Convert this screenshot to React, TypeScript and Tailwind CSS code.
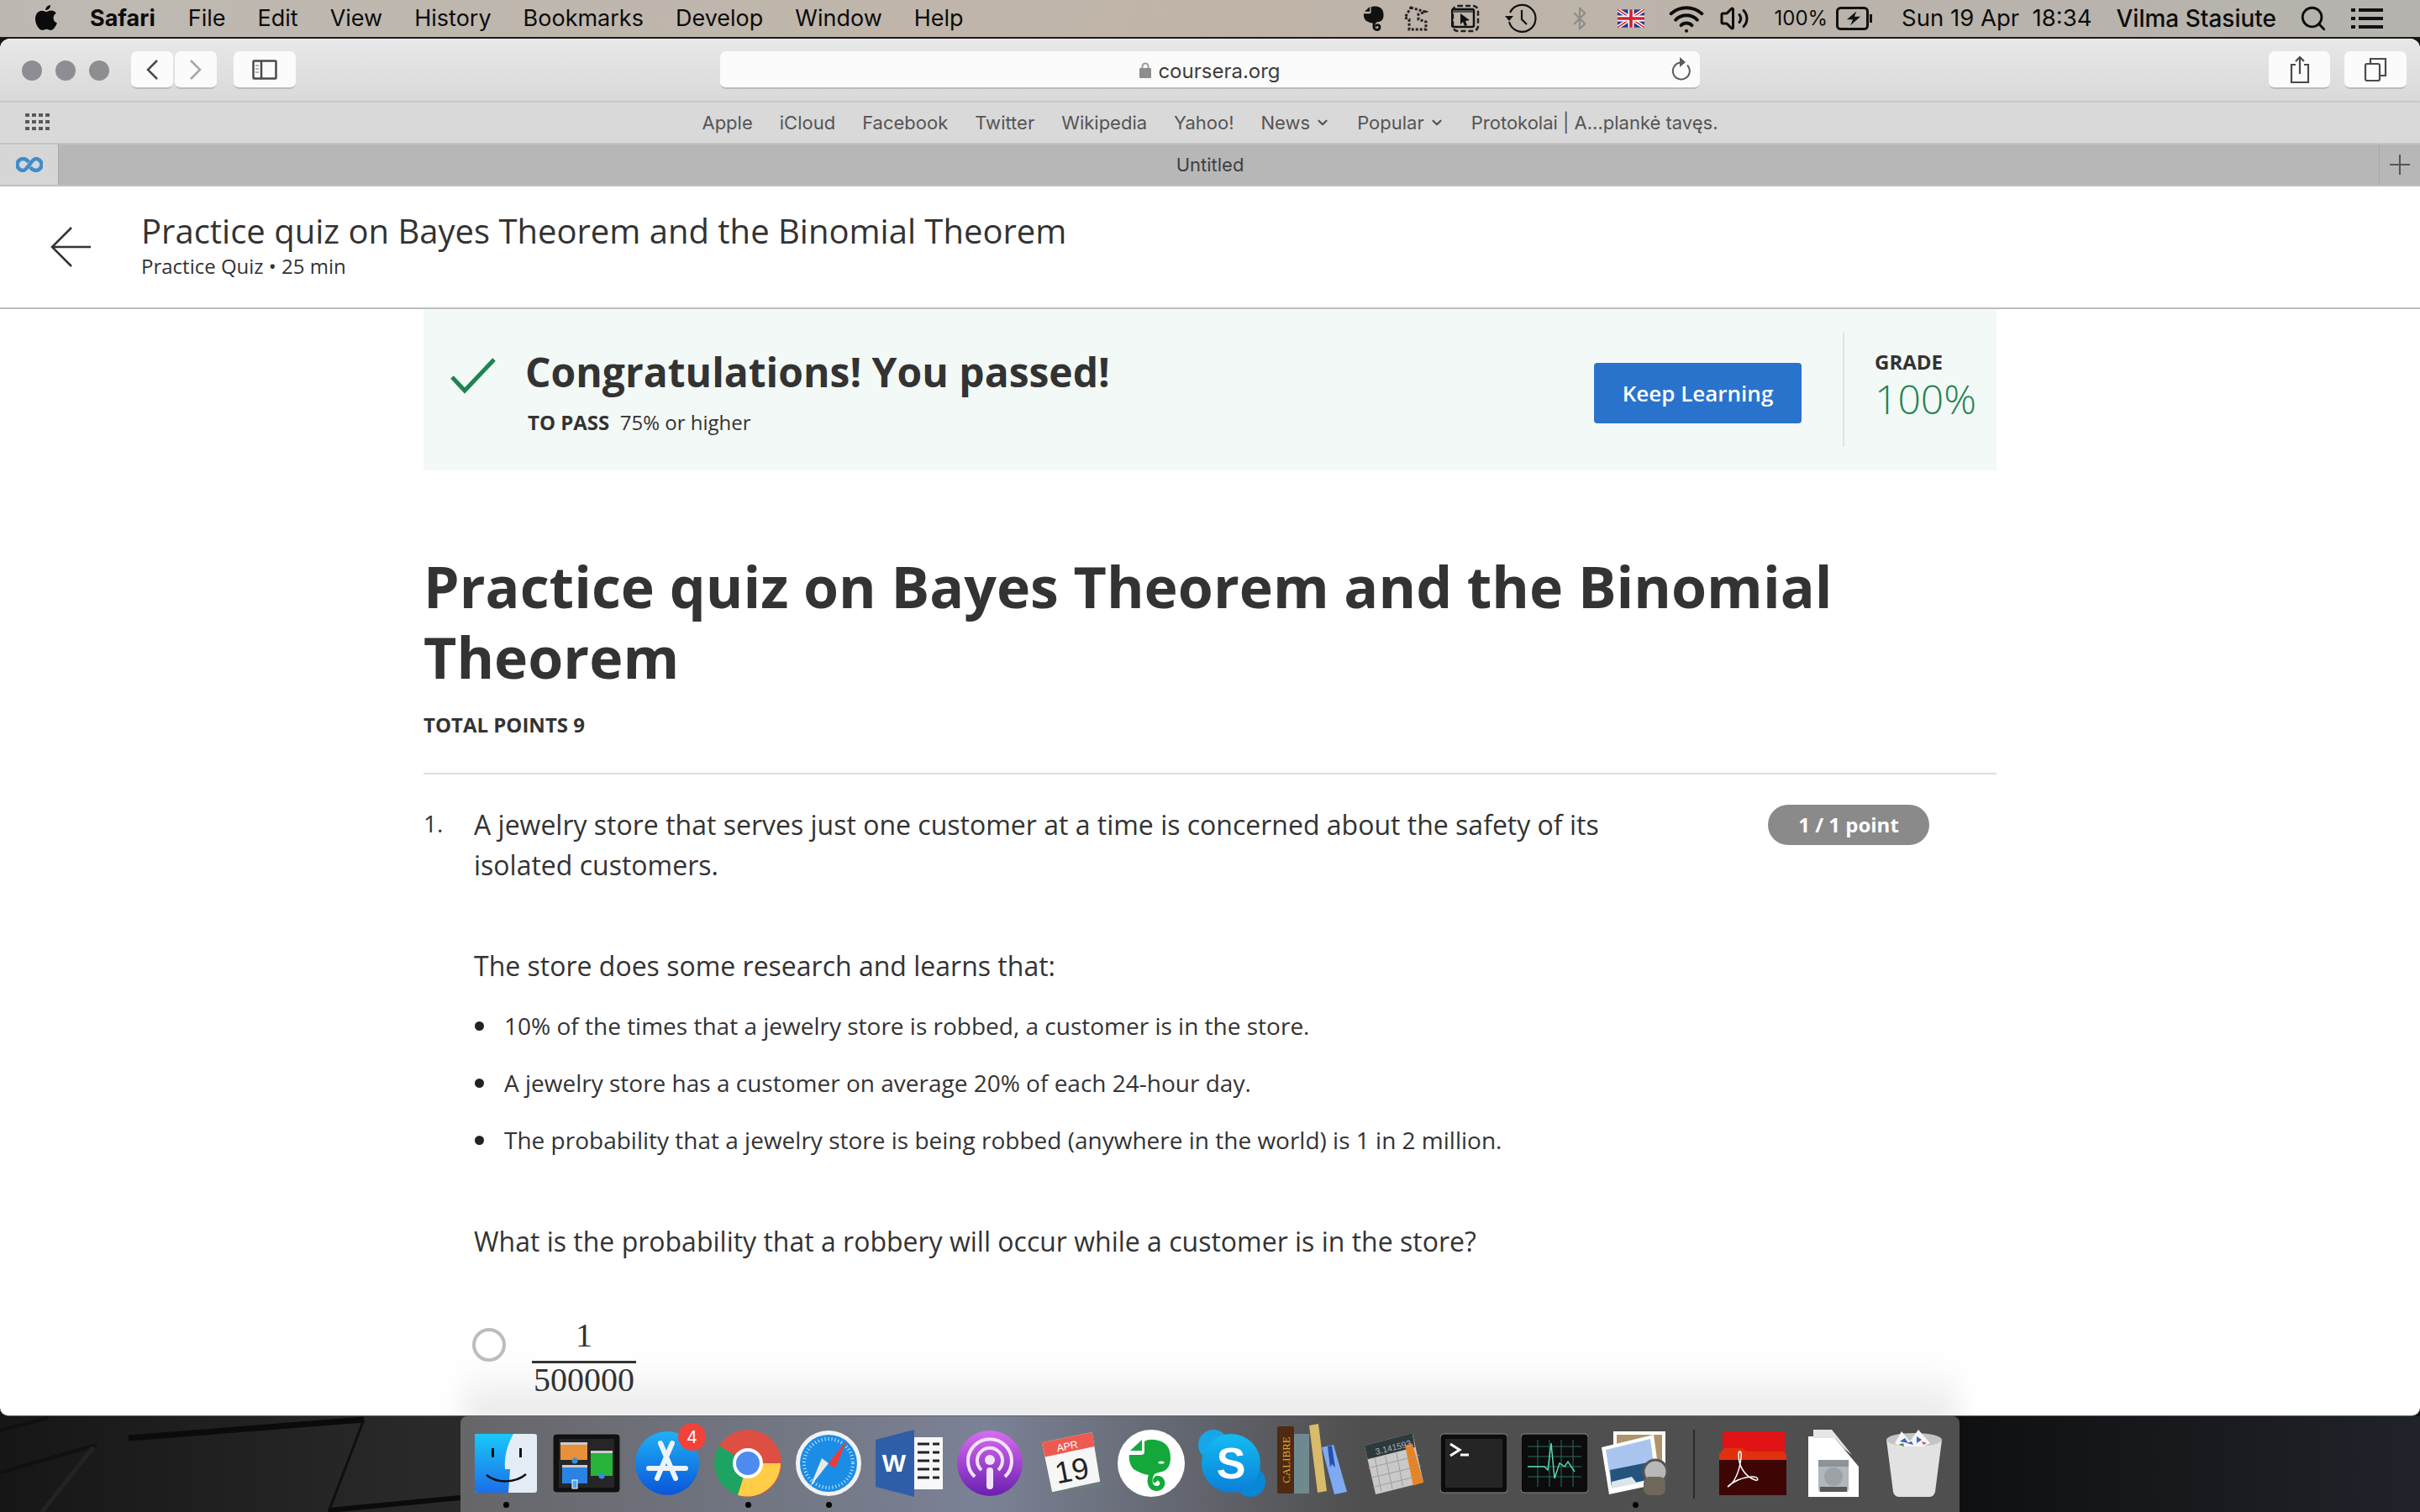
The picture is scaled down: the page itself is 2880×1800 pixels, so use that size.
import { Bluetooth, ChevronDown, Search, Volume2, Wifi } from "lucide-react";
import type { ReactNode } from "react";

const menus = ["File", "Edit", "View", "History", "Bookmarks", "Develop", "Window", "Help"];
const bookmarks = ["Apple", "iCloud", "Facebook", "Twitter", "Wikipedia", "Yahoo!"];
const bullets = [
  "10% of the times that a jewelry store is robbed, a customer is in the store.",
  "A jewelry store has a customer on average 20% of each 24-hour day.",
  "The probability that a jewelry store is being robbed (anywhere in the world) is 1 in 2 million.",
];

const elephantBody =
  "M16 30L28 30Q32 30 32 26L32 14Q36 11 44 12C56 13 63 20 63 33C63 42 60 48 53 50C48 51 44 52 42 54L37 54C30 53 24 50 19 47C15 43 13 35 14 30Z";

function AppleLogo() {
  return (
    <svg width="28" height="32" viewBox="0 0 28 32" className="text-[#0b0b0b]">
      <path
        fill="currentColor"
        d="M19 1c.3 3-2.600 6.300-5.800 6.100C12.800 4.200 15.800 1.200 19 1zM14 9c1.600 0 3.300-1.400 5.800-1.400 2.300 0 4.600 1.100 6 3.200-4.900 2.900-4 9.700 1.100 11.700-1.300 3.200-4.300 8.500-7.300 8.500-1.900 0-2.900-1.300-5.200-1.300s-3.500 1.300-5.300 1.300C5.300 31 1 23.600 1 17.600 1 11.500 5 7.800 8.700 7.800 10.900 7.800 12.500 9 14 9z"
      />
    </svg>
  );
}

function StatusIcons() {
  return (
    <div className="ml-auto flex items-center pr-[44px] text-[28px] text-[#0c0c0c]">
      <svg width="26" height="34" viewBox="12 10 54 64">
        <path d="M29 13L29 25L16 25Z" fill="#111" />
        <path d={elephantBody} fill="#111" />
        <path d="M42 50C36 60 38 70 47 70C54 70 56 60 49 58C46 57 44 60 46 62" fill="none" stroke="#111" strokeWidth="6" />
      </svg>
      <svg width="30" height="32" viewBox="0 0 30 32" className="ml-[22px]" fill="none" stroke="#222" strokeWidth="3" strokeDasharray="3 2">
        <path d="M9 3l17 5-8 3v6l9 3v9H7V17L2 15z" />
      </svg>
      <svg width="34" height="34" viewBox="0 0 34 34" className="ml-[27px]" fill="none">
        <rect x="2" y="2" width="30" height="30" rx="6" stroke="#222" strokeWidth="2.500" strokeDasharray="6 3" />
        <rect x="1" y="6" width="26" height="21" rx="2" stroke="#111" strokeWidth="2.500" />
        <rect x="2" y="7" width="24" height="3" fill="#555" />
        <path d="M11 11l11 8-5 1 2 5-3 1-2-5-3 3z" fill="#111" />
      </svg>
      <svg width="38" height="38" viewBox="0 0 38 38" className="ml-[30px]" fill="none" stroke="#111" strokeWidth="2.200">
        <path d="M6 12a16 16 0 1 1-1 11" />
        <path d="M0 16h10l-5 6z" fill="#111" stroke="none" />
        <path d="M20 9v11l6 6" />
      </svg>
      <Bluetooth size={30} strokeWidth={1.700} className="ml-[36px] text-[#8f8d89]" />
      <svg width="32" height="22" viewBox="0 0 60 40" className="ml-[30px]">
        <rect width="60" height="40" fill="#283b8e" />
        <path d="M0 0l60 40M60 0L0 40" stroke="#fff" strokeWidth="8" />
        <path d="M0 0l60 40M60 0L0 40" stroke="#d3232f" strokeWidth="3" />
        <path d="M30 0v40M0 20h60" stroke="#fff" strokeWidth="13" />
        <path d="M30 0v40M0 20h60" stroke="#d3232f" strokeWidth="7" />
      </svg>
      <Wifi size={44} strokeWidth={2.200} className="ml-[28px]" />
      <Volume2 size={36} strokeWidth={2} className="ml-[17px]" />
      <span className="ml-[29px] text-[24px]">100%</span>
      <svg width="44" height="28" viewBox="0 0 44 28" className="ml-[10px]" fill="none">
        <rect x="1.500" y="1.500" width="36" height="25" rx="4" stroke="#111" strokeWidth="3" />
        <rect x="40" y="9" width="3" height="10" fill="#111" />
        <path d="M26 3L11 16h8l-4 9 16-14h-8z" fill="#111" stroke="#b8b5ae" strokeWidth="1.500" />
      </svg>
      <span className="ml-[34px] text-[27.500px]">Sun 19 Apr&nbsp; 18:34</span>
      <span className="ml-[29px] font-medium">Vilma Stasiute</span>
      <Search size={34} strokeWidth={2} className="ml-[27px]" />
      <svg width="38" height="26" viewBox="0 0 38 26" className="ml-[28px]" fill="#111">
        <rect y="1" width="5" height="4" />
        <rect x="9" y="1" width="29" height="4" />
        <rect y="11" width="5" height="4" />
        <rect x="9" y="11" width="29" height="4" />
        <rect y="21" width="5" height="4" />
        <rect x="9" y="21" width="29" height="4" />
      </svg>
    </div>
  );
}

function ToolButton({ className, children }: { className: string; children: ReactNode }) {
  return (
    <div className={`flex h-[45px] items-center justify-center rounded-[7px] border-b-2 border-[#bcbcbc] bg-[#fbfbfb] ${className}`}>
      {children}
    </div>
  );
}

function Toolbar() {
  return (
    <div className="flex h-[76px] shrink-0 items-start border-b-2 border-[#c8c8c8] bg-gradient-to-b from-[#e8e8e8] to-[#d9d9d9] pt-[15px]">
      <div className="ml-[26px] mt-[11px] flex gap-[16px]">
        <div className="h-[24px] w-[24px] rounded-full bg-[#8e8e92]" />
        <div className="h-[24px] w-[24px] rounded-full bg-[#8e8e92]" />
        <div className="h-[24px] w-[24px] rounded-full bg-[#8e8e92]" />
      </div>
      <ToolButton className="ml-[26px] w-[50px]">
        <svg width="18" height="26" viewBox="0 0 18 26" fill="none" stroke="#4a4a4a" strokeWidth="2.500">
          <path d="M15 2L4 13l11 11" />
        </svg>
      </ToolButton>
      <ToolButton className="ml-[2px] w-[50px]">
        <svg width="18" height="26" viewBox="0 0 18 26" fill="none" stroke="#a6a6a6" strokeWidth="2.500">
          <path d="M3 2l11 11L3 24" />
        </svg>
      </ToolButton>
      <ToolButton className="ml-[20px] w-[74px]">
        <svg width="30" height="24" viewBox="0 0 30 24" fill="none" stroke="#4a4a4a" strokeWidth="2.500">
          <rect x="1.500" y="1.500" width="27" height="21" rx="1" />
          <path d="M11 1.500v21" />
          <path d="M4 7h4M4 11h4M4 15h4" strokeWidth="1.500" stroke="#999" />
        </svg>
      </ToolButton>
      <ToolButton className="relative ml-[505px] w-[1166px]">
        <svg width="14" height="20" viewBox="0 0 14 20" className="mr-[8px] mt-[1px]">
          <path d="M3.500 9V6a3.500 3.500 0 0 1 7 0v3" fill="none" stroke="#9a9a9a" strokeWidth="2" />
          <rect y="8" width="14" height="12" rx="1" fill="#8d8d8d" />
        </svg>
        <span className="pt-[4px] text-[24px] text-[#3d3d3d]">coursera.org</span>
        <svg width="26" height="30" viewBox="0 0 26 30" className="absolute right-[11px] top-[7px]" fill="none" stroke="#5a5a5a" strokeWidth="2">
          <path d="M15 6.500a10 10 0 1 0 7 3" />
          <path d="M13 0l7 6-7 6z" fill="#5a5a5a" stroke="none" />
        </svg>
      </ToolButton>
      <ToolButton className="ml-[677px] w-[73px]">
        <svg width="24" height="34" viewBox="0 0 24 34" fill="none" stroke="#4a4a4a" strokeWidth="2.200">
          <path d="M7 11H2v21h20V11h-5M12 22V2M7 7l5-5 5 5" />
        </svg>
      </ToolButton>
      <ToolButton className="ml-[17px] w-[74px]">
        <svg width="28" height="30" viewBox="0 0 28 30" fill="none" stroke="#4a4a4a" strokeWidth="2.200">
          <rect x="2" y="8" width="17" height="20" rx="2" />
          <path d="M8 8V2h18v20h-7" />
        </svg>
      </ToolButton>
    </div>
  );
}

function BookmarksBar() {
  return (
    <div className="relative flex h-[50px] shrink-0 items-center justify-center gap-[32px] border-b-2 border-[#c4c4c4] bg-[#d9d9d9] text-[22px] text-[#555]">
      <div className="absolute left-[30px] top-[13px] grid grid-cols-4 gap-x-[3px] gap-y-[4px]">
        {Array.from({ length: 12 }).map((_, i) => (
          <div key={i} className="h-[4px] w-[5px] bg-[#5a5a5a]" />
        ))}
      </div>
      {bookmarks.map((b) => (
        <span key={b}>{b}</span>
      ))}
      <span className="flex items-center gap-[6px]">
        News <ChevronDown size={18} strokeWidth={3} />
      </span>
      <span className="flex items-center gap-[6px]">
        Popular <ChevronDown size={18} strokeWidth={3} />
      </span>
      <span>Protokolai | A...plankė tavęs.</span>
    </div>
  );
}

function TabBar() {
  return (
    <div className="flex h-[50px] shrink-0 items-stretch border-b-2 border-[#c0c0c0] bg-[#b7b7b7] text-[22px] text-[#3f3f3f]">
      <div className="flex w-[70px] items-center justify-center border-r border-[#a9a9a9] bg-[#d6d6d6]">
        <svg width="32" height="18" viewBox="0 0 32 18" fill="none" stroke="#3f8ccb" strokeWidth="4.500">
          <path d="M15 6c-2-3-4-4-6.500-4a7 7 0 0 0 0 14c5 0 10-14 15-14a7 7 0 0 1 0 14c-2.500 0-4.500-1-6.500-4" />
        </svg>
      </div>
      <div className="flex flex-1 items-center justify-center pr-[21px]">Untitled</div>
      <div className="flex w-[49px] items-center justify-center border-l border-[#a9a9a9]">
        <svg width="24" height="24" viewBox="0 0 24 24" stroke="#555" strokeWidth="2">
          <path d="M12 0v24M0 12h24" />
        </svg>
      </div>
    </div>
  );
}

function Banner() {
  return (
    <div className="flex h-[192px] bg-[#f3f9f6]">
      <svg width="55" height="44" viewBox="0 0 55 44" className="ml-[32px] mt-[57px]" fill="none" stroke="#1f8354" strokeWidth="5">
        <path d="M2 24l15 16L52 3" />
      </svg>
      <div className="ml-[34px] pt-[45px]">
        <h2 className="text-[48px] font-bold leading-[60px] text-[#333]">Congratulations! You passed!</h2>
        <p className="ml-[3px] mt-[16px] text-[24px] leading-[28px] text-[#333]">
          <span className="font-bold">TO PASS</span>&nbsp; 75% or higher
        </p>
      </div>
      <button className="ml-auto mt-[64px] h-[72px] w-[247px] rounded-[4px] bg-[#2a73cc] text-[26px] font-semibold text-white">
        Keep Learning
      </button>
      <div className="ml-[49px] mt-[28px] h-[136px] w-[2px] bg-[#dfe5e2]" />
      <div className="ml-[36px] w-[145px] pt-[48px]">
        <p className="text-[24px] font-bold leading-[30px] text-[#333]">GRADE</p>
        <p className="text-[48px] font-light leading-[58px] text-[#1f8354]">100%</p>
      </div>
    </div>
  );
}

function Question() {
  return (
    <div className="mt-[36px] flex">
      <div className="w-[60px] text-[28px] leading-[44px] text-[#333]">1.</div>
      <div className="flex-1 text-[#333]">
        <div className="flex items-start">
          <p className="w-[1400px] text-[32px] leading-[48px]">
            A jewelry store that serves just one customer at a time is concerned about the safety of its isolated customers.
          </p>
          <div className="ml-auto mr-[80px] flex h-[48px] w-[192px] items-center justify-center rounded-full bg-[#8a8a8a] text-[24px] font-bold text-white">
            1 / 1 point
          </div>
        </div>
        <p className="mt-[72px] text-[32px] leading-[48px]">The store does some research and learns that:</p>
        <ul className="mt-[27px] flex flex-col gap-[28px]">
          {bullets.map((b) => (
            <li key={b} className="flex items-center text-[28px] leading-[40px]">
              <span className="ml-[1px] mr-[24px] h-[11px] w-[11px] rounded-full bg-[#222]" />
              {b}
            </li>
          ))}
        </ul>
        <p className="mt-[77px] text-[32px] leading-[48px]">What is the probability that a robbery will occur while a customer is in the store?</p>
        <div className="mt-[63px] flex items-start">
          <div className="-ml-[2px] mt-[16px] h-[40px] w-[40px] rounded-full border-[4px] border-[#bdbdbd]" />
          <div className="ml-[31px] w-[124px] text-center font-['Liberation_Serif',serif] text-[40px] text-[#333]">
            <div className="h-[58px] border-b-[3px] border-[#333] leading-[50px]">1</div>
            <div className="leading-[40px]">500000</div>
          </div>
        </div>
      </div>
    </div>
  );
}

function IconFinder() {
  return (
    <svg viewBox="0 0 80 80" className="h-full w-full">
      <defs>
        <linearGradient id="fb" x1="0" y1="0" x2="0" y2="1">
          <stop offset="0" stopColor="#19c8fb" />
          <stop offset="1" stopColor="#1b6fe8" />
        </linearGradient>
      </defs>
      <rect x="3" y="5" width="74" height="70" rx="3" fill="#e4edf6" />
      <path d="M6 5h43c-8 14-11 28-10 42h6l-2 28H6a3 3 0 0 1-3-3V8a3 3 0 0 1 3-3z" fill="url(#fb)" />
      <rect x="23" y="22" width="3" height="11" fill="#111" />
      <rect x="56" y="22" width="3" height="11" fill="#111" />
      <path d="M17 54c12 10 34 10 47-1" fill="none" stroke="#111" strokeWidth="2.500" />
    </svg>
  );
}

function IconMission() {
  return (
    <svg viewBox="0 0 80 80" className="h-full w-full">
      <rect x="0" y="5" width="80" height="70" rx="4" fill="#111" stroke="#777" />
      <rect x="7" y="11" width="66" height="58" fill="#262626" />
      <rect x="9" y="15" width="32" height="21" fill="#e8903a" />
      <rect x="9" y="15" width="32" height="3" fill="#ccc" />
      <rect x="45" y="25" width="26" height="30" fill="#28b33a" />
      <rect x="45" y="25" width="26" height="3" fill="#ccc" />
      <rect x="11" y="42" width="30" height="22" fill="#2a82e4" />
      <rect x="11" y="42" width="30" height="3" fill="#ccc" />
      <circle cx="26" cy="37" r="3.500" fill="#2f8ee8" />
      <circle cx="58" cy="55" r="3.500" fill="#2f8ee8" />
      <rect x="23" y="60" width="6" height="10" fill="#4aa7f0" stroke="#fff" />
    </svg>
  );
}

function IconAppStore() {
  return (
    <svg viewBox="0 0 80 80" className="h-full w-full">
      <defs>
        <linearGradient id="ab" x1="0" y1="0" x2="0" y2="1">
          <stop offset="0" stopColor="#1fb1f7" />
          <stop offset="1" stopColor="#0a55d8" />
        </linearGradient>
      </defs>
      <circle cx="40" cy="40" r="38" fill="url(#ab)" />
      <path d="M46 16L28 58M32 16l18 42M18 46h44" stroke="#eef3f8" strokeWidth="6" strokeLinecap="round" fill="none" />
    </svg>
  );
}

function IconChrome() {
  return (
    <svg viewBox="0 0 80 80" className="h-full w-full">
      <circle cx="40" cy="40" r="40" fill="#dd4f43" />
      <path d="M40 40L6 19A40 40 0 0 0 28 78z" fill="#1da462" />
      <path d="M40 40h39A40 40 0 0 1 28 78z" fill="#ffcd46" />
      <circle cx="40" cy="40" r="18" fill="#fff" />
      <circle cx="40" cy="40" r="14" fill="#4e8bf0" />
    </svg>
  );
}

function IconSafari() {
  return (
    <svg viewBox="0 0 80 80" className="h-full w-full">
      <circle cx="40" cy="40" r="39" fill="#f2f2f2" />
      <circle cx="40" cy="40" r="34" fill="#1b8de6" />
      <circle cx="40" cy="40" r="29" fill="none" stroke="#cfeaff" strokeWidth="4" strokeDasharray="1 3" />
      <path d="M40 40l22-28-14 34z" fill="#ee3a33" />
      <path d="M40 40L18 68l14-34z" fill="#e8e8e8" />
    </svg>
  );
}

function IconWord() {
  return (
    <svg viewBox="0 0 80 80" className="h-full w-full">
      <rect x="44" y="9" width="36" height="62" fill="#f7f7f7" />
      <path d="M50 17h26M50 27h26M50 37h26M50 47h26M50 57h26" stroke="#222" strokeWidth="3" strokeDasharray="14 4 8 0" />
      <path d="M0 12L46 0v80L0 68z" fill="#2f5ea8" />
      <text x="22" y="50" textAnchor="middle" fontSize="30" fontWeight="700" fill="#fff" fontFamily="'Liberation Sans',sans-serif">W</text>
    </svg>
  );
}

function IconPodcasts() {
  return (
    <svg viewBox="0 0 80 80" className="h-full w-full">
      <defs>
        <linearGradient id="pc" x1="0" y1="0" x2="0" y2="1">
          <stop offset="0" stopColor="#d76cf0" />
          <stop offset="1" stopColor="#6a1fb0" />
        </linearGradient>
      </defs>
      <circle cx="40" cy="40" r="39" fill="url(#pc)" />
      <path d="M22 56a26 26 0 1 1 36 0" fill="none" stroke="#f2e3fb" strokeWidth="4" />
      <path d="M30 48a15 15 0 1 1 20 0" fill="none" stroke="#f2e3fb" strokeWidth="4" />
      <circle cx="40" cy="36" r="6" fill="#f2e3fb" />
      <rect x="36" y="45" width="8" height="26" rx="4" fill="#f2e3fb" />
    </svg>
  );
}

function IconCalendar() {
  return (
    <svg viewBox="0 0 80 80" className="h-full w-full">
      <path d="M2 16L66 2l13 66-61 12z" fill="#6d7b7f" />
      <path d="M4 14L67 1l10 62-60 13z" fill="#f6f6f6" />
      <path d="M4 14L67 1l3 18-62 13z" fill="#ee5a50" />
      <text x="36" y="23" textAnchor="middle" fontSize="13" fill="#fff" transform="rotate(-11 36 19)" fontFamily="'Liberation Sans',sans-serif">APR</text>
      <text x="42" y="62" textAnchor="middle" fontSize="38" fill="#222" transform="rotate(-11 42 50)" fontFamily="'Liberation Sans',sans-serif">19</text>
    </svg>
  );
}

function IconEvernote() {
  return (
    <svg viewBox="0 0 80 80" className="h-full w-full">
      <circle cx="40" cy="40" r="40" fill="#fff" />
      <path d="M29 12L29 25L15 25Z" fill="#14a83b" />
      <path d={elephantBody} fill="#14a83b" />
      <path d="M42 50C36 60 38 70 47 70C54 70 56 60 49 58C46 57 44 60 46 62" fill="none" stroke="#14a83b" strokeWidth="6" />
      <ellipse cx="52" cy="39" rx="3.500" ry="1.500" fill="#fff" />
    </svg>
  );
}

function IconSkype() {
  return (
    <svg viewBox="0 0 80 80" className="h-full w-full">
      <defs>
        <linearGradient id="sk" x1="0" y1="0" x2="0" y2="1">
          <stop offset="0" stopColor="#14bcf3" />
          <stop offset="1" stopColor="#0a7fd8" />
        </linearGradient>
      </defs>
      <circle cx="18" cy="18" r="18" fill="#18a6e8" />
      <circle cx="62" cy="62" r="18" fill="#0a86d6" />
      <circle cx="39" cy="40" r="35" fill="url(#sk)" />
      <text x="39" y="58" textAnchor="middle" fontSize="52" fontWeight="700" fill="#fff" fontFamily="'Liberation Sans',sans-serif">S</text>
    </svg>
  );
}

function IconCalibre() {
  return (
    <svg viewBox="0 0 84 80" className="h-full w-full overflow-visible">
      <rect x="0" y="-4" width="20" height="80" rx="2" fill="#4f2a10" />
      <rect x="20" y="5" width="18" height="71" fill="#6f8a8f" />
      <path d="M38 -5l11-2 10 80-11 2z" fill="#d8bb6c" />
      <path d="M53 21l14-3 16 56-15 3z" fill="#7eaaf4" />
      <path d="M60 20l5-1 4 26-4-4-2 4z" fill="#2850a8" />
      <text x="-36" y="15" fontSize="13" fill="#e0a93a" transform="rotate(-90)" textAnchor="middle" fontFamily="'Liberation Serif',serif">CALIBRE</text>
    </svg>
  );
}

function IconCalculator() {
  return (
    <svg viewBox="0 0 80 80" className="h-full w-full">
      <path d="M4 18L64 2l14 62-60 15z" fill="#c9c9c9" />
      <path d="M4 18L64 2l3 18-59 15z" fill="#2d3a3c" />
      <path d="M55 18l9-3 14 49-13 4z" fill="#e98320" />
      <text x="40" y="24" fontSize="11" textAnchor="middle" fill="#aab" transform="rotate(-14 40 20)" fontFamily="'Liberation Sans',sans-serif">3.141593</text>
      <path d="M17 33l8 42M30 30l9 42M44 26l8 43M9 46l64-16M13 58l62-15M15 70l60-15" stroke="#9c9c9c" strokeWidth="1" />
    </svg>
  );
}

function IconTerminal() {
  return (
    <svg viewBox="0 0 80 80" className="h-full w-full">
      <rect y="5" width="80" height="70" rx="4" fill="#0c0c0c" stroke="#8a8a8a" />
      <rect x="6" y="11" width="68" height="58" fill="#252525" />
      <path d="M12 17l11 7-11 7" fill="none" stroke="#fff" strokeWidth="3" />
      <path d="M24 30h10" stroke="#fff" strokeWidth="3" />
    </svg>
  );
}

function IconActivity() {
  return (
    <svg viewBox="0 0 80 80" className="h-full w-full">
      <rect y="5" width="80" height="70" rx="4" fill="#0c0c0c" stroke="#8a8a8a" />
      <path d="M8 20h64M8 32h64M8 44h64M8 56h64M20 12v56M34 12v56M48 12v56M62 12v56" stroke="#2d6a62" strokeWidth="1" />
      <path d="M8 44h20l4 4 4-32 4 42 6-18 6 4 4-6 8 12" fill="none" stroke="#58d6b8" strokeWidth="1.500" />
    </svg>
  );
}

function IconPreview() {
  return (
    <svg viewBox="0 0 80 80" className="h-full w-full">
      <rect x="14" y="2" width="62" height="44" fill="#fff" />
      <rect x="18" y="6" width="54" height="38" fill="#ae946a" />
      <path d="M0 21l62-15 8 58-61 13z" fill="#fff" />
      <path d="M5 24l53-13 6 47-52 11z" fill="#a9c5ef" />
      <path d="M10 48l50-10 3 20-51 11z" fill="#24547e" />
      <path d="M12 62l24-6 6 8-30 6z" fill="#dbe6ec" />
      <circle cx="64" cy="50" r="14" fill="#b8b8b8" stroke="#555" strokeWidth="3" />
      <rect x="50" y="56" width="26" height="22" rx="7" fill="#6f675a" />
    </svg>
  );
}

function IconAcrobat() {
  return (
    <svg viewBox="0 0 80 80" className="h-full w-full">
      <path d="M4 2h74v26H4z" fill="#e01414" />
      <path d="M0 29l6-7h22l4 4h44l4 4v8H0z" fill="#e0310e" />
      <rect y="36" width="80" height="42" fill="#3e0505" />
      <path d="M10 68c8-4 14-18 16-34 1-10-3-10-3-4 0 14 8 26 20 30 5 1 3-4-3-4-12 0-24 6-30 12z" fill="none" stroke="#fff" strokeWidth="1.500" />
    </svg>
  );
}

function IconDocs() {
  return (
    <svg viewBox="0 0 60 80" className="h-full w-full">
      <path d="M0 8h30l30 36v36H0z" fill="#fff" />
      <path d="M6 0h22l24 30-10-8-10-12H6z" fill="#e6e6e6" />
      <rect x="12" y="36" width="36" height="38" rx="3" fill="#b1b7bb" />
      <rect x="12" y="36" width="36" height="8" fill="#8d9396" />
      <circle cx="30" cy="56" r="11" fill="#9ca2a6" />
      <rect x="14" y="68" width="32" height="6" fill="#55595c" />
    </svg>
  );
}

function IconTrash() {
  return (
    <svg viewBox="0 0 70 80" className="h-full w-full">
      <path d="M2 12h66l-8 62a8 8 0 0 1-8 6H18a8 8 0 0 1-8-6z" fill="#e2e2e2" />
      <ellipse cx="35" cy="12" rx="33" ry="8" fill="#c4c4c4" />
      <path d="M12 16l8-14 10 12 10-14 14 16-8 4H18z" fill="#f6f6f6" />
      <path d="M18 14l6-4 4 6zM38 8l6 4-6 4zM26 16l6-2 2 4z" fill="#3f66b8" />
      <path d="M44 14l6 2-4 2z" fill="#c8553a" />
      <path d="M16 18l6-2 1 4z" fill="#4a8b4a" />
    </svg>
  );
}

const dockIcons: { icon: ReactNode; dot?: boolean; w: string }[] = [
  { icon: <IconFinder />, dot: true, w: "w-[80px]" },
  { icon: <IconMission />, w: "w-[80px]" },
  { icon: <IconAppStore />, w: "w-[80px]" },
  { icon: <IconChrome />, dot: true, w: "w-[84px]" },
  { icon: <IconSafari />, dot: true, w: "w-[80px]" },
  { icon: <IconWord />, w: "w-[80px]" },
  { icon: <IconPodcasts />, w: "w-[80px]" },
  { icon: <IconCalendar />, w: "w-[76px]" },
  { icon: <IconEvernote />, w: "w-[80px]" },
  { icon: <IconSkype />, w: "w-[80px]" },
  { icon: <IconCalibre />, w: "w-[84px]" },
  { icon: <IconCalculator />, w: "w-[76px]" },
  { icon: <IconTerminal />, w: "w-[80px]" },
  { icon: <IconActivity />, w: "w-[80px]" },
  { icon: <IconPreview />, dot: true, w: "w-[84px]" },
];

function DockSlot({ icon, dot, w, badge }: { icon: ReactNode; dot?: boolean; w: string; badge?: string }) {
  return (
    <div className="relative flex w-[96px] flex-col items-center pt-[16px]">
      <div className={`h-[80px] ${w}`}>{icon}</div>
      {dot && <div className="absolute bottom-[5px] h-[7px] w-[7px] rounded-full bg-black" />}
      {badge && (
        <div className="absolute right-[2px] top-[8px] flex h-[33px] w-[33px] items-center justify-center rounded-full bg-[#f2423a] text-[20px] text-white">
          {badge}
        </div>
      )}
    </div>
  );
}

function Dock() {
  return (
    <div className="relative flex h-[114px] w-[1784px] rounded-t-[8px] bg-gradient-to-r from-[#666669] via-[#7b8296] via-35% to-[#4f4f4f] to-60% pl-[6px]">
      {dockIcons.map((d, i) => (
        <DockSlot key={i} icon={d.icon} dot={d.dot} w={d.w} badge={i === 2 ? "4" : undefined} />
      ))}
      <div className="flex w-[44px] justify-center pt-[16px]">
        <div className="h-[82px] w-[2px] bg-[#2a2a2a]" />
      </div>
      <DockSlot icon={<IconAcrobat />} w="w-[80px]" />
      <DockSlot icon={<IconDocs />} w="w-[60px]" />
      <DockSlot icon={<IconTrash />} w="w-[70px]" />
    </div>
  );
}

// paving slabs in the wallpaper, left of the dock
function Wallpaper() {
  return (
    <svg width="600" height="114" viewBox="0 0 600 114" className="absolute left-0 top-0" fill="none" stroke="#0b0b0b">
      <path d="M153 26L433 4" strokeWidth="7" />
      <path d="M0 67L115 34M0 17L57 2" strokeWidth="4" stroke="#101010" />
      <path d="M50 114L111 37" strokeWidth="5" stroke="#232323" />
      <path d="M391 114L433 4" strokeWidth="3" stroke="#0f0f0f" />
      <path d="M391 112L548 97" strokeWidth="6" />
    </svg>
  );
}

export default function App() {
  return (
    <div className="flex h-[1800px] w-[2880px] flex-col overflow-hidden bg-[#141414] font-['Inter',sans-serif]">
      <div className="flex h-[44px] shrink-0 items-center bg-gradient-to-r from-[#bdb9b2] via-[#c0b4a8] to-[#b5b3ae] text-[27px] text-[#0c0c0c]">
        <div className="ml-[41px] mb-[2px]">
          <AppleLogo />
        </div>
        <span className="ml-[38px] font-bold">Safari</span>
        <div className="ml-[39px] flex gap-[38px]">
          {menus.map((m) => (
            <span key={m}>{m}</span>
          ))}
        </div>
        <StatusIcons />
      </div>
      <div className="h-[2px] shrink-0 bg-[#1a1a1a]" />

      <div className="relative z-10 flex h-[1640px] shrink-0 flex-col overflow-hidden rounded-b-[10px] rounded-t-[12px] border-b border-[#666] bg-white">
        <Toolbar />
        <BookmarksBar />
        <TabBar />

        <div className="flex h-[146px] shrink-0 border-b-2 border-[#bdbdbd] pl-[60px] font-['Open_Sans',sans-serif]">
          <svg width="48" height="48" viewBox="0 0 48 48" className="mt-[48px]" fill="none" stroke="#333" strokeWidth="2.500">
            <path d="M25 1L2 24l23 23M2 24h46" />
          </svg>
          <div className="ml-[60px] pt-[27px] text-[#333]">
            <p className="text-[40px] leading-[52px]">Practice quiz on Bayes Theorem and the Binomial Theorem</p>
            <p className="text-[24px] leading-[32px]">Practice Quiz • 25 min</p>
          </div>
        </div>

        <div className="pointer-events-none absolute bottom-[-16px] left-[550px] right-[550px] h-[80px] bg-gradient-to-t from-[#e4e4e4] to-transparent blur-[16px]" />

        <main className="relative mx-auto w-[1872px] font-['Open_Sans',sans-serif]">
          <Banner />
          <h1 className="mt-[96px] text-[68px] font-bold leading-[84px] text-[#333]">
            Practice quiz on Bayes Theorem and the Binomial Theorem
          </h1>
          <p className="mt-[23px] text-[24px] font-bold leading-[32px] text-[#333]">TOTAL POINTS 9</p>
          <div className="mt-[41px] h-[2px] bg-[#dedede]" />
          <Question />
        </main>
      </div>

      <div className="relative flex flex-1 justify-center bg-[linear-gradient(90deg,#161616,#2a2a2a_18%,#0f1011_81%,#20232a)]">
        <Wallpaper />
        <Dock />
      </div>
    </div>
  );
}
